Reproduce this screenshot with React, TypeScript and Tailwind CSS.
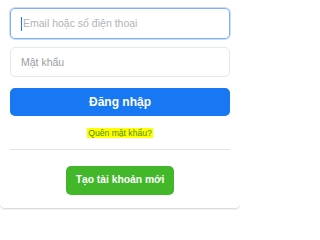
import React from "react";

export default function App() {
  return (
    <div className="w-[240px] h-[210px] bg-white overflow-hidden" style={{ fontFamily: '"Liberation Sans", Arial, sans-serif' }}>
      <div className="w-[240px] h-[209px] bg-white rounded-b-[5px] border-b border-[#dcdcdc] shadow-[0_1px_2px_rgba(0,0,0,0.08)] px-[10px] pt-[8px] flex flex-col">
        <div className="h-[31px] rounded-[5px] border border-[#7fb0f7] shadow-[0_0_0_1px_#c9ddfb] flex items-center px-[10px]">
          <span className="w-px h-[14px] bg-[#1877f2] mr-[1px]"></span>
          <span className="text-[10.5px] text-[#b0b3b8] leading-none">Email hoặc số điện thoại</span>
        </div>
        <div className="mt-[8px] h-[30px] rounded-[5px] border border-[#e6e7ea] flex items-center px-[10px]">
          <span className="text-[10.5px] text-[#9a9da2] leading-none">Mật khẩu</span>
        </div>
        <div className="mt-[11px] h-[28px] rounded-[5px] bg-[#1877f2] flex items-center justify-center">
          <span className="text-[12px] font-bold text-white leading-none">Đăng nhập</span>
        </div>
        <div className="mt-[12px] flex justify-center">
          <span className="bg-[#ffff00] text-[#4e8e1c] text-[8.6px] leading-[10px] px-[1px]">Quên mật khẩu?</span>
        </div>
        <div className="mt-[11px] h-px bg-[#e3e4e7]"></div>
        <div className="mt-[16px] flex justify-center">
          <div className="h-[29px] w-[108px] rounded-[5px] bg-[#42b72a] flex items-center justify-center">
            <span className="text-[10.3px] font-bold text-white leading-none">Tạo tài khoản mới</span>
          </div>
        </div>
      </div>
    </div>
  );
}
